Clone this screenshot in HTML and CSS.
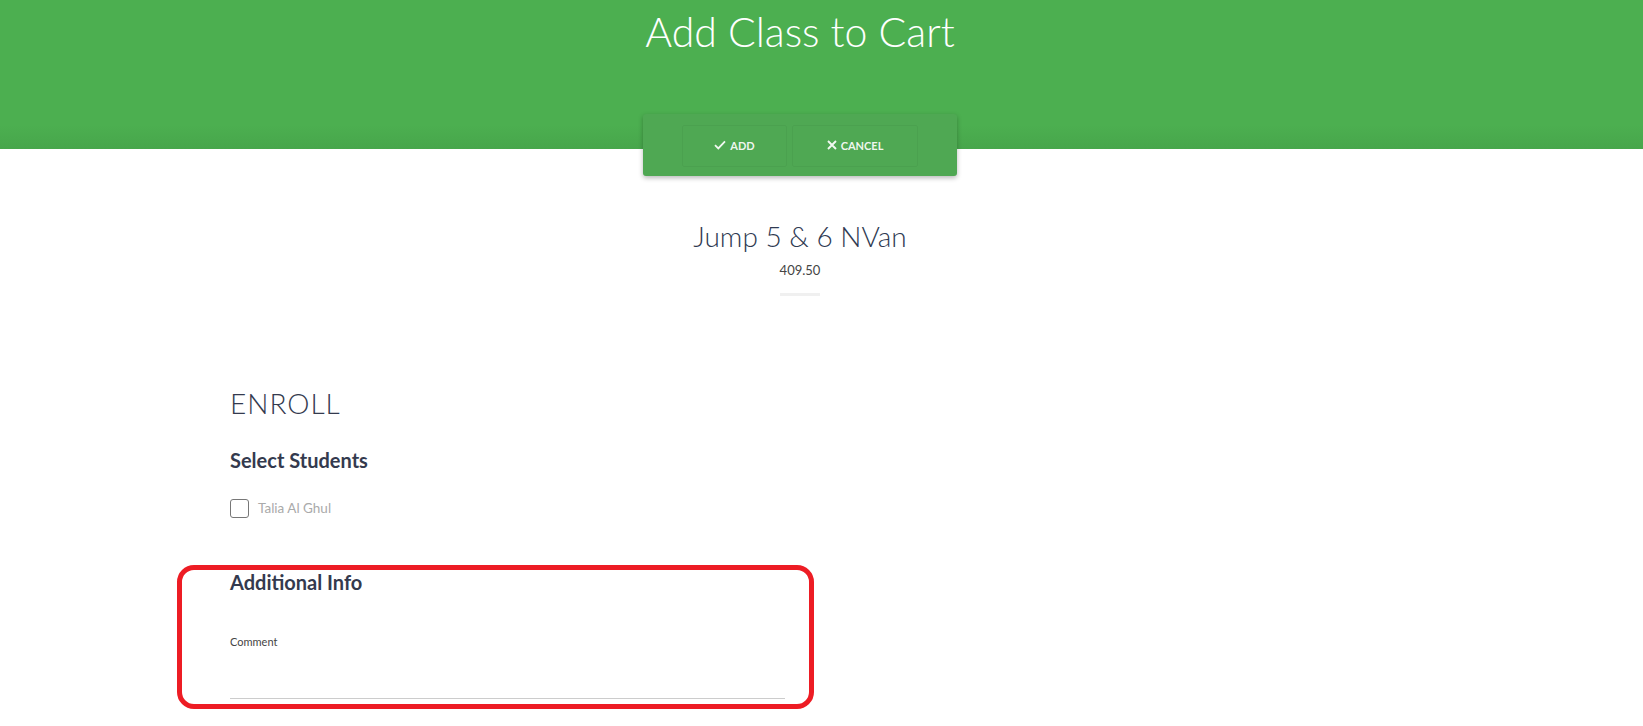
FILE: index.html
```html
<!DOCTYPE html>
<html lang="en">
<head>
    <meta charset="UTF-8">
    <meta name="viewport" content="width=device-width, initial-scale=1.0">
    <title>Add Class to Cart</title>
    <link rel="stylesheet" href="styles.css">
</head>
<body>
    <header class="banner">
        <div class="wrap">
            <h1>Add Class to Cart</h1>
        </div>
    </header>

    <div class="wrap">
        <div class="toolbar">
            <button type="button" class="tool-btn">
                <svg width="12" height="10" viewBox="0 0 12 10"><path d="M1 5.2 L4.3 8.4 L11 1.4" fill="none" stroke="currentColor" stroke-width="1.8"/></svg>
                Add
            </button>
            <button type="button" class="tool-btn">
                <svg width="10" height="10" viewBox="0 0 10 10"><path d="M1 1 L9 9 M9 1 L1 9" fill="none" stroke="currentColor" stroke-width="1.9"/></svg>
                Cancel
            </button>
        </div>

        <div class="class-info">
            <h2>Jump 5 &amp; 6 NVan</h2>
            <div class="price">409.50</div>
            <div class="sep"></div>
        </div>

        <div class="container">
            <form class="enroll" id="enrollForm">
                <h3 class="section-title">ENROLL</h3>

                <h4>Select Students</h4>
                <label class="check">
                    <input type="checkbox" name="Students" value="talia">
                    <span class="box"></span>
                    Talia Al Ghul
                </label>

                <div class="additional">
                    <span class="highlight"></span>
                    <h4>Additional Info</h4>
                    <label for="comment" class="field-label">Comment</label>
                    <input type="text" id="comment" name="Comment" class="line-input">
                </div>
            </form>
        </div>
    </div>
</body>
</html>
```

FILE: styles.css
```css
body {
    margin: 0;
    min-height: 100vh;
    padding-bottom: 20px;
    font-family: Lato, "Open Sans", sans-serif;
    background-color: #fff;
    color: #343a4e;
}
.wrap {
    width: 1600px;
}
.banner {
    height: 149px;
    padding-top: 8px;
    box-sizing: border-box;
    background: linear-gradient(to bottom, #4caf50 0, #4caf50 125px, #47a64b 149px);
}
.banner h1 {
    margin: 0;
    text-align: center;
    color: #fff;
    font-weight: 300;
    font-size: 41px;
    line-height: 48px;
}
.toolbar {
    width: 314px;
    height: 62px;
    margin: -35px auto 0 auto;
    padding: 11px 39px 9px 39px;
    box-sizing: border-box;
    display: flex;
    gap: 5px;
    background-color: #4fa853;
    border-radius: 3px;
    box-shadow: 0 2px 5px rgba(0, 0, 0, 0.28);
    position: relative;
}
.tool-btn {
    height: 42px;
    width: 105px;
    display: flex;
    align-items: center;
    justify-content: center;
    gap: 4px;
    background: transparent;
    border: 1px solid rgba(0, 0, 0, 0.04);
    border-radius: 2px;
    color: rgba(255, 255, 255, 0.92);
    font-family: Lato, sans-serif;
    font-size: 11px;
    font-weight: 700;
    text-transform: uppercase;
    padding: 0 0 2px 0;
    cursor: pointer;
}
.tool-btn + .tool-btn {
    width: 126px;
}
.class-info {
    text-align: center;
    margin-top: 43px;
}
.class-info h2 {
    margin: 0;
    font-weight: 300;
    font-size: 28px;
    line-height: 34px;
    color: #2f3a52;
}
.price {
    margin-top: 8px;
    font-size: 13px;
    line-height: 18px;
    color: #444;
}
.sep {
    width: 40px;
    height: 3px;
    margin: 14px auto 0 auto;
    background-color: #f0f0f0;
}
.container {
    width: 1170px;
    margin: 0 auto;
    padding: 0 15px;
    box-sizing: border-box;
}
.enroll {
    width: 555px;
}
.section-title {
    margin: 90px 0 0 0;
    font-weight: 300;
    font-size: 28px;
    line-height: 34px;
    letter-spacing: 1px;
    color: #343a4e;
}
h4 {
    margin: 28px 0 0 0;
    font-size: 20px;
    line-height: 24px;
    font-weight: 700;
    color: #343a4e;
}
.check {
    margin-top: 26px;
    display: flex;
    align-items: center;
    gap: 9px;
    height: 20px;
    font-size: 13.5px;
    line-height: 18px;
    color: #aaa;
    cursor: pointer;
}
.check input {
    display: none;
}
.check .box {
    width: 19px;
    height: 19px;
    box-sizing: border-box;
    border: 1.5px solid #777;
    border-radius: 3px;
}
.additional {
    position: relative;
    margin-top: 52px;
}
.additional h4 {
    margin-top: 0;
}
.field-label {
    display: block;
    margin-top: 41px;
    font-size: 11px;
    line-height: 14px;
    color: #444;
}
.line-input {
    display: block;
    width: 100%;
    height: 50px;
    box-sizing: border-box;
    border: none;
    border-bottom: 1px solid #ccc;
    outline: none;
    font-family: Lato, sans-serif;
    font-size: 14px;
}
.highlight {
    position: absolute;
    top: -5px;
    left: -53px;
    width: 637px;
    height: 144px;
    box-sizing: border-box;
    border: 5px solid #ed1c24;
    border-radius: 17px;
    pointer-events: none;
}
```
